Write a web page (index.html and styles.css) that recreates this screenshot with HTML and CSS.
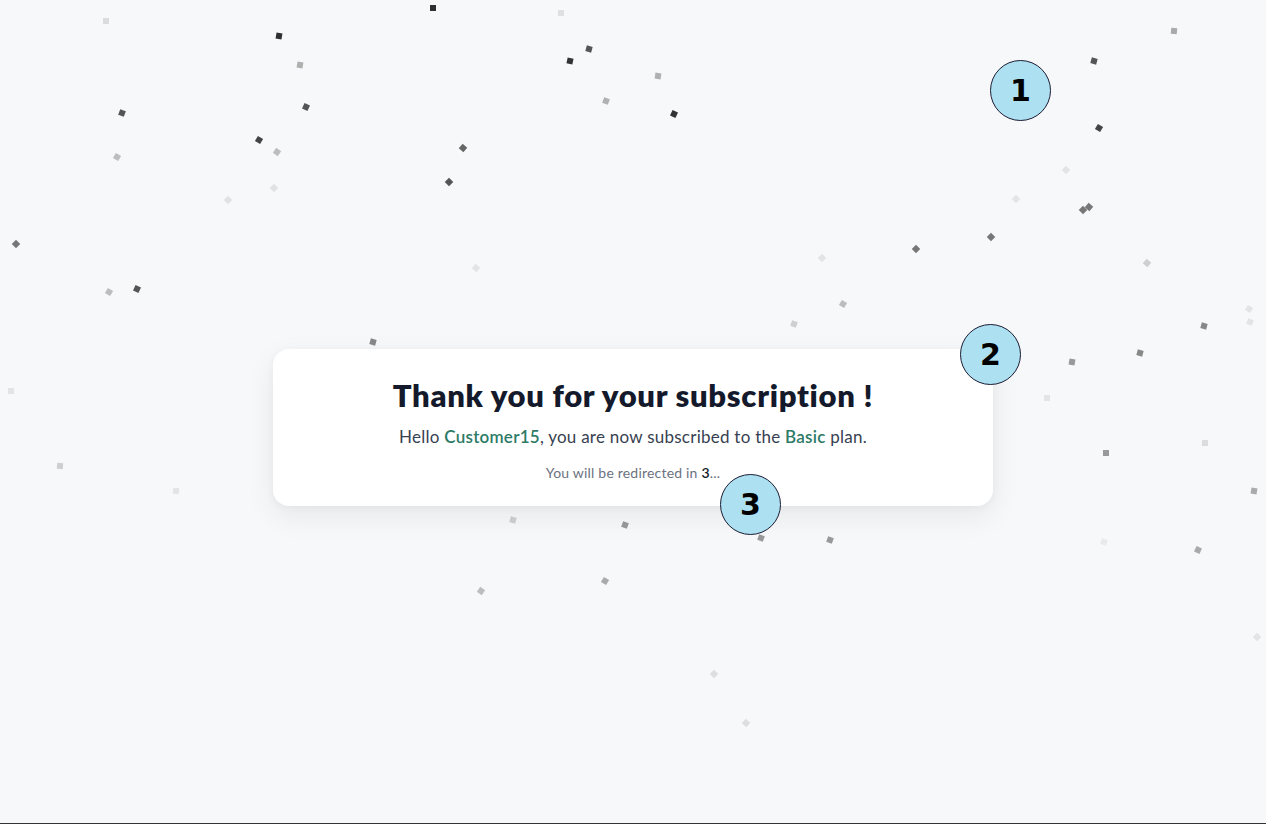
FILE: index.html
```html
<!DOCTYPE html>
<html lang="en">
<head>
<meta charset="utf-8">
<title>Subscription confirmed</title>
<link rel="stylesheet" href="styles.css">
</head>
<body>
<div class="page">
  <div class="confetti" aria-hidden="true">
    <i style="left:103px;top:18px;background:#dcdcdc;transform:rotate(0deg)"></i>
    <i style="left:276px;top:33px;background:#2f2f2f;transform:rotate(10deg)"></i>
    <i style="left:430px;top:5px;background:#2f2f2f;transform:rotate(0deg)"></i>
    <i style="left:558px;top:10px;background:#e0e0e0;transform:rotate(0deg)"></i>
    <i style="left:567px;top:58px;background:#333;transform:rotate(12deg)"></i>
    <i style="left:586px;top:46px;background:#555;transform:rotate(15deg)"></i>
    <i style="left:655px;top:73px;background:#b0b0b0;transform:rotate(8deg)"></i>
    <i style="left:603px;top:98px;background:#b0b0b0;transform:rotate(20deg)"></i>
    <i style="left:671px;top:111px;background:#333;transform:rotate(25deg)"></i>
    <i style="left:297px;top:62px;background:#b0b0b0;transform:rotate(10deg)"></i>
    <i style="left:119px;top:110px;background:#555;transform:rotate(20deg)"></i>
    <i style="left:303px;top:104px;background:#555;transform:rotate(25deg)"></i>
    <i style="left:114px;top:154px;background:#bdbdbd;transform:rotate(30deg)"></i>
    <i style="left:256px;top:137px;background:#444;transform:rotate(30deg)"></i>
    <i style="left:274px;top:149px;background:#bdbdbd;transform:rotate(35deg)"></i>
    <i style="left:460px;top:145px;background:#666;transform:rotate(40deg)"></i>
    <i style="left:446px;top:179px;background:#555;transform:rotate(45deg)"></i>
    <i style="left:271px;top:185px;background:#e2e2e2;transform:rotate(45deg)"></i>
    <i style="left:225px;top:197px;background:#e2e2e2;transform:rotate(45deg)"></i>
    <i style="left:13px;top:241px;background:#777;transform:rotate(45deg)"></i>
    <i style="left:106px;top:289px;background:#bdbdbd;transform:rotate(30deg)"></i>
    <i style="left:134px;top:286px;background:#555;transform:rotate(25deg)"></i>
    <i style="left:473px;top:265px;background:#e4e4e4;transform:rotate(40deg)"></i>
    <i style="left:370px;top:339px;background:#888;transform:rotate(15deg)"></i>
    <i style="left:8px;top:388px;background:#e4e4e4;transform:rotate(0deg)"></i>
    <i style="left:57px;top:463px;background:#cfcfcf;transform:rotate(5deg)"></i>
    <i style="left:173px;top:488px;background:#e4e4e4;transform:rotate(5deg)"></i>
    <i style="left:510px;top:517px;background:#cfcfcf;transform:rotate(15deg)"></i>
    <i style="left:622px;top:522px;background:#999;transform:rotate(20deg)"></i>
    <i style="left:478px;top:588px;background:#bdbdbd;transform:rotate(35deg)"></i>
    <i style="left:602px;top:578px;background:#aaa;transform:rotate(30deg)"></i>
    <i style="left:758px;top:535px;background:#999;transform:rotate(20deg)"></i>
    <i style="left:827px;top:537px;background:#999;transform:rotate(20deg)"></i>
    <i style="left:711px;top:671px;background:#dedede;transform:rotate(45deg)"></i>
    <i style="left:743px;top:720px;background:#dedede;transform:rotate(40deg)"></i>
    <i style="left:1171px;top:28px;background:#aaa;transform:rotate(5deg)"></i>
    <i style="left:1091px;top:58px;background:#555;transform:rotate(15deg)"></i>
    <i style="left:1096px;top:125px;background:#444;transform:rotate(30deg)"></i>
    <i style="left:1063px;top:167px;background:#e4e4e4;transform:rotate(45deg)"></i>
    <i style="left:1013px;top:196px;background:#e4e4e4;transform:rotate(45deg)"></i>
    <i style="left:1080px;top:207px;background:#777;transform:rotate(45deg)"></i>
    <i style="left:1086px;top:204px;background:#777;transform:rotate(40deg)"></i>
    <i style="left:988px;top:234px;background:#777;transform:rotate(45deg)"></i>
    <i style="left:913px;top:246px;background:#777;transform:rotate(45deg)"></i>
    <i style="left:819px;top:255px;background:#e4e4e4;transform:rotate(45deg)"></i>
    <i style="left:1144px;top:260px;background:#cfcfcf;transform:rotate(40deg)"></i>
    <i style="left:840px;top:301px;background:#bdbdbd;transform:rotate(30deg)"></i>
    <i style="left:791px;top:321px;background:#cfcfcf;transform:rotate(20deg)"></i>
    <i style="left:1246px;top:306px;background:#e4e4e4;transform:rotate(30deg)"></i>
    <i style="left:1247px;top:319px;background:#e4e4e4;transform:rotate(20deg)"></i>
    <i style="left:1201px;top:323px;background:#888;transform:rotate(15deg)"></i>
    <i style="left:1137px;top:350px;background:#888;transform:rotate(15deg)"></i>
    <i style="left:1069px;top:359px;background:#999;transform:rotate(10deg)"></i>
    <i style="left:1044px;top:395px;background:#e4e4e4;transform:rotate(0deg)"></i>
    <i style="left:1202px;top:440px;background:#dcdcdc;transform:rotate(0deg)"></i>
    <i style="left:1103px;top:450px;background:#999;transform:rotate(0deg)"></i>
    <i style="left:1251px;top:488px;background:#aaa;transform:rotate(10deg)"></i>
    <i style="left:1101px;top:539px;background:#eaeaea;transform:rotate(20deg)"></i>
    <i style="left:1195px;top:547px;background:#aaa;transform:rotate(25deg)"></i>
    <i style="left:1254px;top:634px;background:#e4e4e4;transform:rotate(45deg)"></i>
  </div>

  <main class="card">
    <h1 class="title">Thank you for your subscription !</h1>
    <p class="lead">Hello <span class="accent">Customer15</span>, you are now subscribed to the <span class="accent">Basic</span> plan.</p>
    <p class="note">You will be redirected in <strong class="count">3</strong>...</p>
  </main>

  <span class="marker marker-1">1</span>
  <span class="marker marker-2">2</span>
  <span class="marker marker-3">3</span>
</div>
</body>
</html>
```

FILE: styles.css
```css
* { box-sizing: border-box; }

html, body {
  margin: 0;
  padding: 0;
}

body {
  background: #f7f8f9;
  font-family: "Lato", "Inter", "Liberation Sans", sans-serif;
  color: #111827;
}

.page {
  position: relative;
  height: 824px;
  border-bottom: 1px solid #333;
  overflow: hidden;
  display: flex;
  align-items: center;
  justify-content: center;
  padding-top: 31px;
}

.confetti {
  position: absolute;
  inset: 0;
  pointer-events: none;
}

.confetti i {
  position: absolute;
  width: 6px;
  height: 6px;
  display: block;
}

.card {
  position: relative;
  z-index: 1;
  width: 720px;
  background: #fff;
  border-radius: 16px;
  box-shadow: 0 10px 30px rgba(17, 24, 39, 0.07), 0 2px 8px rgba(17, 24, 39, 0.04);
  padding: 28px 32px 23px;
  text-align: center;
}

.title {
  margin: 0;
  font-size: 31px;
  line-height: 36px;
  font-weight: 800;
  color: #141a2b;
  letter-spacing: 0.7px;
}

.lead {
  margin: 12px 0 0;
  font-size: 17px;
  line-height: 24px;
  color: #374151;
  letter-spacing: 0.25px;
}

.accent {
  color: #2d7a66;
  font-weight: 600;
}

.note {
  margin: 14px 0 0;
  font-size: 14px;
  line-height: 20px;
  color: #6b7280;
  letter-spacing: 0.2px;
}

.count {
  color: #111827;
  font-weight: 600;
}

.marker {
  position: absolute;
  z-index: 2;
  width: 61px;
  height: 61px;
  border-radius: 50%;
  background: #ade1f2;
  border: 1.5px solid #1c1c33;
  display: flex;
  align-items: center;
  justify-content: center;
  font-family: "DejaVu Sans", sans-serif;
  font-weight: 700;
  font-size: 30px;
  color: #000;
  line-height: 1;
}

.marker-1 { left: 990px; top: 60px; }
.marker-2 { left: 960px; top: 324px; }
.marker-3 { left: 720px; top: 474px; }
```
